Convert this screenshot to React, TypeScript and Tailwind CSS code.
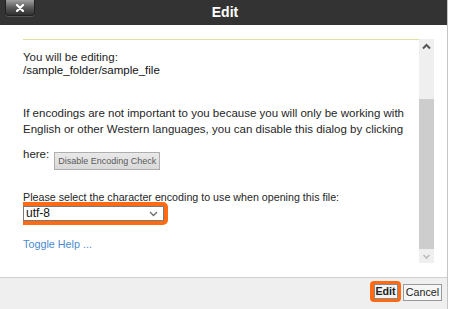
export default function App() {
  return (
    <div className="w-[449px] h-[309px] bg-white font-['Liberation_Sans',Arial,sans-serif] text-[#262626] overflow-hidden">
      <div className="w-[448px] h-[309px] flex flex-col border-r border-[#c4c4c4]">
        {/* Header */}
        <div className="h-[25px] bg-[#333333] grid grid-cols-[1fr_auto_1fr] items-start shrink-0">
          <div className="flex">
            <div className="ml-[5px] w-[30px] h-[16px] rounded-b-[4px] border border-t-0 border-[#222] bg-linear-to-b from-[#a0a0a0] via-[#5c5c5c] to-[#2f2f2f] flex items-center justify-center shadow-[0_1px_0_#555]">
              <svg width="8" height="8" viewBox="0 0 8 8">
                <path d="M1 1 L7 7 M7 1 L1 7" stroke="#ffffff" strokeWidth="2.2" strokeLinecap="round" />
              </svg>
            </div>
          </div>
          <div className="text-white font-bold text-[14px] leading-[25px] pl-[3px]">Edit</div>
          <div />
        </div>

        {/* Body */}
        <div className="flex-1 bg-white pl-[23px] pt-[14px]">
          <div className="flex h-[224px]">
            <div className="w-[396px] border-t border-[#e3dfa0] text-[11.5px] overflow-hidden">
              <div className="mt-[11px] leading-[13px]">
                <div>You will be editing:</div>
                <div className="text-[#111]">/sample_folder/sample_file</div>
              </div>
              <div className="mt-[28px] leading-[16px]">
                <div>If encodings are not important to you because you will only be working with</div>
                <div>English or other Western languages, you can disable this dialog by clicking</div>
                <div className="flex items-start">
                  <span className="mt-[9px]">here:</span>
                  <button className="ml-[5px] mt-[15px] h-[18px] px-[3px] bg-linear-to-b from-[#e9e9e9] to-[#d9d9d9] border border-[#aeaeae] text-[9px] leading-[16px] text-[#5a5a5a] font-['Liberation_Sans',Arial,sans-serif]">
                    Disable Encoding Check
                  </button>
                </div>
              </div>
              <div className="mt-[21px] leading-[12px] text-[10.7px]">Please select the character encoding to use when opening this file:</div>
              <div className="mt-[-1px] ml-[-4px] w-[149px] h-[23px] rounded-[5px] bg-[#ff6a13] p-[4px]">
                <div className="h-[15px] bg-white border border-[#7a7a7a] flex items-center justify-between pl-[2px] pr-[5px]">
                  <span className="text-[12px] leading-[13px] text-[#111]">utf-8</span>
                  <svg width="9" height="6" viewBox="0 0 9 6">
                    <path d="M1 1 L4.5 4.5 L8 1" stroke="#6a6a6a" strokeWidth="1.3" fill="none" />
                  </svg>
                </div>
              </div>
              <div className="mt-[11px] leading-[16px] text-[10.8px] text-[#4a8bd0]">Toggle Help ...</div>
            </div>
            {/* Scrollbar */}
            <div className="w-[15px] h-[224px] bg-[#efefef] flex flex-col">
              <div className="h-[14px] flex items-center justify-center">
                <svg width="9" height="7" viewBox="0 0 9 7">
                  <path d="M1 5.5 L4.5 2 L8 5.5" stroke="#555555" strokeWidth="2" fill="none" />
                </svg>
              </div>
              <div className="flex-1" />
              <div className="h-[150px] bg-[#cdcdcd]" />
              <div className="h-[14px] flex items-center justify-center">
                <svg width="9" height="7" viewBox="0 0 9 7">
                  <path d="M1.5 2 L4.5 5 L7.5 2" stroke="#bcbcbc" strokeWidth="1.6" fill="none" />
                </svg>
              </div>
            </div>
          </div>
        </div>

        {/* Footer */}
        <div className="h-[32px] shrink-0 bg-[#efefef] border-t border-[#cfcfcf] flex justify-end items-start pr-[5px]">
          <div className="mt-[3px] w-[31px] h-[21px] rounded-[4px] bg-[#ff6a13] flex items-center justify-center">
            <div className="w-[24px] h-[15px] bg-[#f4f4f4] border border-[#8a8a8a] text-[10.7px] font-bold leading-[13px] text-[#222] flex items-center justify-center">
              Edit
            </div>
          </div>
          <div className="ml-[2px] mt-[6px] w-[39px] h-[17px] bg-[#f6f6f6] border border-[#9a9a9a] text-[10.7px] leading-[15px] text-[#222] flex items-center justify-center">
            Cancel
          </div>
        </div>
      </div>
    </div>
  );
}
